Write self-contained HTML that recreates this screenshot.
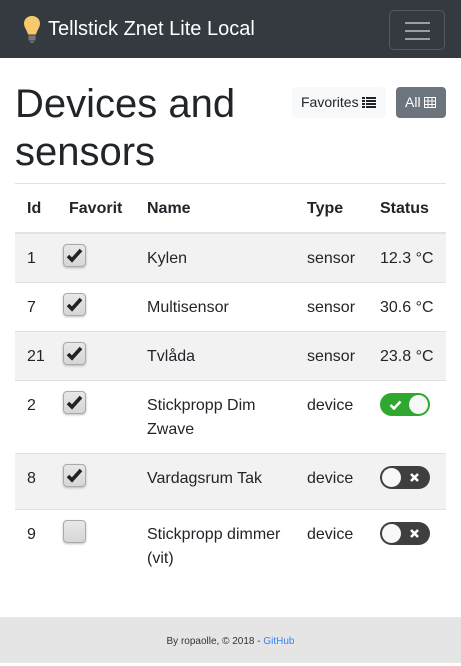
<!DOCTYPE html>
<html><head><meta charset="utf-8"><style>
*{box-sizing:border-box;margin:0;padding:0}
body{width:461px;height:663px;overflow:hidden;font-family:"Liberation Sans",sans-serif;color:#212529;background:#fff;position:relative}
.a{position:absolute}
.nav{left:0;top:0;width:461px;height:58px;background:#343a40}
.brand{left:48px;top:17px;color:#fff;font-size:20px;line-height:24px}
.tog{left:389px;top:10px;width:56px;height:40px;border:1px solid #555a60;border-radius:5px}
.tog i{position:absolute;left:15px;width:25px;height:2px;background:#9a9da1}
h1{position:absolute;left:15px;top:80px;font-size:40px;line-height:48px;font-weight:400}
.btn{top:87px;height:31px;border-radius:4px;font-size:14px;line-height:31px;padding:0 9px}
.row{left:15px;width:431px}
.g{background:#f2f2f2}
.t{font-size:16px;line-height:24px;position:absolute;margin-top:2px}
.h{font-weight:bold}
.cb{position:absolute;left:63px;width:23px;height:23px;border:1px solid #aaa;border-radius:4px;background:linear-gradient(#e8e8e8,#d6d6d6);box-shadow:0 1px 2px rgba(0,0,0,.25)}
.cb svg{position:absolute;left:2px;top:2px}
.sw{position:absolute;left:380px;width:50px;height:23px;border-radius:12px}
.on{background:#2fa82f}
.off{background:#3f3f3f}
.k{position:absolute;top:2px;width:19px;height:19px;border-radius:50%;background:#f8f8f8}
.line{left:15px;width:431px;height:1px;background:#dee2e6}
.foot{left:0;top:617px;width:461px;height:46px;background:#e5e5e5;text-align:center;font-size:10px;line-height:49px;color:#333}
</style></head><body>
<div class="a nav"></div>
<svg class="a" style="left:22px;top:15px" width="20" height="30" viewBox="0 0 20 30"><path d="M10 1C5 1 2 4.5 2 8.5c0 4 3 6.5 4 11h8c1-4.5 4-7 4-11C18 4.5 15 1 10 1z" fill="#f7c96b"/><rect x="6.5" y="20.5" width="7" height="5" fill="#777"/><rect x="8" y="26" width="4" height="2" fill="#666"/></svg>
<div class="a brand">Tellstick Znet Lite Local</div>
<div class="a tog"><i style="top:11px"></i><i style="top:19px"></i><i style="top:27px"></i></div>
<h1>Devices and<br>sensors</h1>
<div class="a btn" style="left:292px;width:94px;background:#f8f9fa">Favorites <svg width="14" height="11" viewBox="0 0 14 11" style="vertical-align:-1px"><g fill="#212529"><rect x="0" y="0" width="3" height="2"/><rect x="4" y="0" width="10" height="2"/><rect x="0" y="3" width="3" height="2"/><rect x="4" y="3" width="10" height="2"/><rect x="0" y="6" width="3" height="2"/><rect x="4" y="6" width="10" height="2"/><rect x="0" y="9" width="3" height="2"/><rect x="4" y="9" width="10" height="2"/></g></svg></div>
<div class="a btn" style="left:396px;width:50px;background:#6c757d;color:#fff">All <svg width="12" height="11" viewBox="0 0 12 11" style="vertical-align:-1px"><rect x=".5" y=".5" width="11" height="10" fill="none" stroke="#fff"/><path d="M4 0v11M8 0v11M0 4h12M0 7.5h12" stroke="#fff"/></svg></div>

<div class="a line" style="top:183px"></div>
<div class="t h" style="left:27px;top:195px">Id</div>
<div class="t h" style="left:69px;top:195px">Favorit</div>
<div class="t h" style="left:147px;top:195px">Name</div>
<div class="t h" style="left:307px;top:195px">Type</div>
<div class="t h" style="left:380px;top:195px">Status</div>
<div class="a line" style="top:232px;height:2px"></div>

<div class="a row g" style="top:234px;height:48px"></div>
<div class="a line" style="top:282px"></div>
<div class="a line" style="top:331px"></div>
<div class="a row g" style="top:332px;height:48px"></div>
<div class="a line" style="top:380px"></div>
<div class="a line" style="top:453px"></div>
<div class="a row g" style="top:454px;height:55px"></div>
<div class="a line" style="top:509px"></div>

<div class="t" style="left:27px;top:245px">1</div>
<div class="cb" style="top:244px"><svg width="17" height="17" viewBox="0 0 17 17"><path d="M2 9l4 4 9-10" fill="none" stroke="#222" stroke-width="3.6"/></svg></div>
<div class="t" style="left:147px;top:245px">Kylen</div>
<div class="t" style="left:307px;top:245px">sensor</div>
<div class="t" style="left:380px;top:245px">12.3 °C</div>

<div class="t" style="left:27px;top:294px">7</div>
<div class="cb" style="top:293px"><svg width="17" height="17" viewBox="0 0 17 17"><path d="M2 9l4 4 9-10" fill="none" stroke="#222" stroke-width="3.6"/></svg></div>
<div class="t" style="left:147px;top:294px">Multisensor</div>
<div class="t" style="left:307px;top:294px">sensor</div>
<div class="t" style="left:380px;top:294px">30.6 °C</div>

<div class="t" style="left:27px;top:343px">21</div>
<div class="cb" style="top:342px"><svg width="17" height="17" viewBox="0 0 17 17"><path d="M2 9l4 4 9-10" fill="none" stroke="#222" stroke-width="3.6"/></svg></div>
<div class="t" style="left:147px;top:343px">Tvlåda</div>
<div class="t" style="left:307px;top:343px">sensor</div>
<div class="t" style="left:380px;top:343px">23.8 °C</div>

<div class="t" style="left:27px;top:392px">2</div>
<div class="cb" style="top:391px"><svg width="17" height="17" viewBox="0 0 17 17"><path d="M2 9l4 4 9-10" fill="none" stroke="#222" stroke-width="3.6"/></svg></div>
<div class="t" style="left:147px;top:392px">Stickpropp Dim<br>Zwave</div>
<div class="t" style="left:307px;top:392px">device</div>
<div class="sw on" style="top:393px"><svg class="a" style="left:9px;top:7px" width="13" height="10" viewBox="0 0 13 10"><path d="M1.5 5l3.5 3.5 6.5-7" fill="none" stroke="#fff" stroke-width="2.6"/></svg><div class="k" style="left:29px"></div></div>

<div class="t" style="left:27px;top:465px">8</div>
<div class="cb" style="top:464px"><svg width="17" height="17" viewBox="0 0 17 17"><path d="M2 9l4 4 9-10" fill="none" stroke="#222" stroke-width="3.6"/></svg></div>
<div class="t" style="left:147px;top:465px">Vardagsrum Tak</div>
<div class="t" style="left:307px;top:465px">device</div>
<div class="sw off" style="top:466px"><div class="k" style="left:2px"></div><svg class="a" style="left:30px;top:7px" width="9" height="9" viewBox="0 0 9 9"><path d="M1 1l7 7M8 1L1 8" stroke="#fff" stroke-width="2.6"/></svg></div>

<div class="t" style="left:27px;top:521px">9</div>
<div class="cb" style="top:520px"></div>
<div class="t" style="left:147px;top:521px">Stickpropp dimmer<br>(vit)</div>
<div class="t" style="left:307px;top:521px">device</div>
<div class="sw off" style="top:522px"><div class="k" style="left:2px"></div><svg class="a" style="left:30px;top:7px" width="9" height="9" viewBox="0 0 9 9"><path d="M1 1l7 7M8 1L1 8" stroke="#fff" stroke-width="2.6"/></svg></div>

<div class="a foot">By ropaolle, © 2018 - <span style="color:#3b82f6">GitHub</span></div>
</body></html>
